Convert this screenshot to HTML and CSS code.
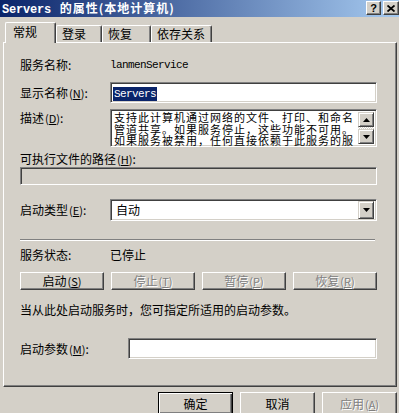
FILE: index.html
```html
<!DOCTYPE html>
<html lang="zh-CN">

<head>
    <meta charset="UTF-8">
    <meta name="viewport" content="width=device-width, initial-scale=1.0">
    <title>Servers 的属性</title>
    <link rel="stylesheet" href="styles.css">
</head>

<body>
    <div class="caption">
        <span class="caption-text"><span class="mono">Servers</span> 的属性(本地计算机)</span>
        <div class="caption-btns">
            <span class="cbtn help">?</span>
            <span class="cbtn close">
                <svg width="8" height="7" viewBox="0 0 8 7">
                    <path d="M0.5 0.5 L7.5 6.5 M7.5 0.5 L0.5 6.5" stroke="#000" stroke-width="1.8" fill="none"/>
                </svg>
            </span>
        </div>
    </div>

    <ul class="tabs">
        <li class="tab active">常规</li>
        <li class="tab t-logon">登录</li>
        <li class="tab t-recover">恢复</li>
        <li class="tab t-depend">依存关系</li>
    </ul>

    <div class="panel">
        <div class="row r-name">
            <span class="label">服务名称:</span>
            <span class="mono">lanmenService</span>
        </div>

        <div class="row r-display">
            <span class="label">显示名称<span class="key">(<u>N</u>)</span>:</span>
            <div class="field edit">
                <span class="mono selected">Servers</span>
            </div>
        </div>

        <div class="row r-desc">
            <span class="label">描述<span class="key">(<u>D</u>)</span>:</span>
            <div class="field memo">
                <div class="memo-text">
                    <p>支持此计算机通过网络的文件、打印、和命名</p>
                    <p>管道共享。如果服务停止，这些功能不可用。</p>
                    <p>如果服务被禁用，任何直接依赖于此服务的服</p>
                </div>
                <div class="vscroll">
                    <span class="sbtn">
                        <svg width="7" height="4" viewBox="0 0 7 4"><path d="M3.5 0 L7 4 L0 4 Z" fill="#000"/></svg>
                    </span>
                    <span class="track"></span>
                    <span class="sbtn">
                        <svg width="7" height="4" viewBox="0 0 7 4"><path d="M0 0 L7 0 L3.5 4 Z" fill="#000"/></svg>
                    </span>
                </div>
            </div>
        </div>

        <div class="row r-pathlabel">
            <span>可执行文件的路径<span class="key">(<u>H</u>)</span>:</span>
        </div>
        <div class="row r-path">
            <div class="field disabled"></div>
        </div>

        <div class="row r-type">
            <span class="label">启动类型<span class="key">(<u>E</u>)</span>:</span>
            <div class="field combo">
                <span class="combo-text">自动</span>
                <span class="drop">
                    <svg width="7" height="4" viewBox="0 0 7 4"><path d="M0 0 L7 0 L3.5 4 Z" fill="#000"/></svg>
                </span>
            </div>
        </div>

        <div class="sep"></div>

        <div class="row r-status">
            <span class="label">服务状态:</span>
            <span>已停止</span>
        </div>

        <div class="row r-buttons">
            <button class="btn">启动<span class="key">(<u>S</u>)</span></button>
            <button class="btn off">停止<span class="key">(<u>T</u>)</span></button>
            <button class="btn off">暂停<span class="key">(<u>P</u>)</span></button>
            <button class="btn off">恢复<span class="key">(<u>R</u>)</span></button>
        </div>

        <div class="row r-hint">当从此处启动服务时，您可指定所适用的启动参数。</div>

        <div class="row r-params">
            <span class="label wide">启动参数<span class="key">(<u>M</u>)</span>:</span>
            <div class="field edit"></div>
        </div>
    </div>

    <div class="footer">
        <button class="btn big default">确定</button>
        <button class="btn big">取消</button>
        <button class="btn big off">应用<span class="key">(<u>A</u>)</span></button>
    </div>
</body>

</html>
```

FILE: styles.css
```css
* {
    margin: 0;
    padding: 0;
    list-style: none;
    box-sizing: border-box;
}

body {
    width: 399px;
    height: 413px;
    overflow: hidden;
    background-color: #d4d0c8;
    font: 12px/14px "Noto Sans CJK SC", sans-serif;
    color: #000;
}

.mono {
    font-family: "Liberation Mono", "Noto Sans CJK SC", monospace;
    font-size: 11px;
    letter-spacing: -0.6px;
}

.key {
    font-size: 11px;
    margin-left: 1px;
}

/* 标题栏 */
.caption {
    height: 17px;
    display: flex;
    align-items: center;
    justify-content: space-between;
    padding-left: 2px;
    background: linear-gradient(to right, #0a246a, #a6caf0);
    color: #fff;
    font-weight: bold;
}

.caption-text {
    letter-spacing: 1px;
}

.caption .mono {
    font-size: 12px;
    letter-spacing: -0.2px;
    margin-right: 5px;
}

.caption-btns {
    display: flex;
    gap: 2px;
    align-self: flex-start;
    margin-top: 1px;
}

.cbtn {
    width: 15px;
    height: 14px;
    display: flex;
    align-items: center;
    justify-content: center;
    background-color: #d4d0c8;
    border: 1px solid;
    border-color: #fff #404040 #404040 #fff;
    box-shadow: inset -1px -1px #808080;
    color: #000;
    font: bold 11px/12px "Liberation Sans", sans-serif;
    letter-spacing: 0;
}

.cbtn.close {
    width: 16px;
}

/* 选项卡 */
.tabs {
    display: flex;
    align-items: flex-end;
    height: 20px;
    margin-top: 5px;
    padding-left: 5px;
}

.tab {
    height: 17px;
    padding-left: 5px;
    line-height: 15px;
    border-top: 1px solid #fff;
    border-left: 1px solid #fff;
    border-right: 1px solid #404040;
    box-shadow: inset -1px 0 #808080;
    border-radius: 2px 2px 0 0;
}

.tab.active {
    width: 51px;
    height: 21px;
    margin-bottom: -1px;
    padding-left: 7px;
    line-height: 17px;
    position: relative;
    z-index: 1;
    background-color: #d4d0c8;
}

.t-logon {
    width: 46px;
}

.t-recover {
    width: 49px;
}

.t-depend {
    width: 61px;
}

/* 属性页 */
.panel {
    margin-left: 3px;
    width: 394px;
    height: 345px;
    border: 1px solid;
    border-color: #fff #404040 #404040 #fff;
    box-shadow: inset -1px -1px #808080;
    padding: 0 19px 0 16px;
}

.row {
    display: flex;
    align-items: center;
}

.label {
    width: 90px;
    flex-shrink: 0;
}

.label.wide {
    width: 108px;
}

.field {
    flex: 1;
    border: 1px solid;
    border-color: #808080 #fff #fff #808080;
    box-shadow: inset 1px 1px #404040, inset -1px -1px #d4d0c8;
    background-color: #fff;
}

.r-name {
    margin-top: 15px;
    height: 14px;
}

.r-display {
    margin-top: 10px;
    height: 21px;
}

.edit {
    height: 21px;
    padding: 2px 0 0 2px;
}

.selected {
    display: inline-block;
    height: 14px;
    line-height: 14px;
    padding: 0 1px;
    background-color: #0a246a;
    color: #fff;
}

.r-desc {
    margin-top: 6px;
    height: 38px;
    align-items: flex-start;
}

.r-desc .label {
    padding-top: 2px;
}

.memo {
    height: 38px;
    display: flex;
    padding: 2px;
}

.memo-text {
    flex: 1;
    height: 34px;
    padding-left: 1px;
    font-size: 11px;
    line-height: 11.6px;
    letter-spacing: 1px;
    white-space: nowrap;
}

.vscroll {
    width: 16px;
    display: flex;
    flex-direction: column;
}

.sbtn {
    height: 15px;
    display: flex;
    align-items: center;
    justify-content: center;
    background-color: #d4d0c8;
    border: 1px solid;
    border-color: #d4d0c8 #404040 #404040 #d4d0c8;
    box-shadow: inset 1px 1px #fff, inset -1px -1px #808080;
}

.track {
    flex: 1;
    background: repeating-conic-gradient(#fff 0 25%, #d4d0c8 0 50%) 0 0 / 2px 2px;
}

.r-pathlabel {
    margin-top: 5px;
    height: 13px;
}

.r-path {
    margin-top: 2px;
    height: 18px;
}

.disabled {
    height: 18px;
    background-color: #d4d0c8;
}

.r-type {
    margin-top: 14px;
    height: 22px;
}

.combo {
    height: 22px;
    display: flex;
    align-items: center;
    padding: 2px;
}

.combo-text {
    flex: 1;
    padding-left: 3px;
}

.drop {
    width: 16px;
    height: 18px;
    display: flex;
    align-items: center;
    justify-content: center;
    background-color: #d4d0c8;
    border: 1px solid;
    border-color: #d4d0c8 #404040 #404040 #d4d0c8;
    box-shadow: inset 1px 1px #fff, inset -1px -1px #808080;
}

.sep {
    margin-top: 18px;
    margin-right: 2px;
    height: 2px;
    border-top: 1px solid #808080;
    border-bottom: 1px solid #fff;
}

.r-status {
    margin-top: 7px;
    height: 14px;
}

/* 按钮 */
.btn {
    height: 18px;
    display: flex;
    align-items: center;
    justify-content: center;
    background-color: #d4d0c8;
    border: 1px solid;
    border-color: #fff #404040 #404040 #fff;
    box-shadow: inset -1px -1px #808080;
    font: inherit;
    color: #000;
}

.btn.off {
    color: #808080;
    text-shadow: 1px 1px #fff;
}

.r-buttons {
    margin-top: 10px;
    height: 18px;
    justify-content: space-between;
}

.r-buttons .btn {
    width: 84px;
}

.r-hint {
    margin-top: 13px;
    height: 14px;
}

.r-params {
    margin-top: 21px;
    height: 21px;
}

.footer {
    display: flex;
    justify-content: flex-end;
    gap: 7px;
    margin-top: 5px;
    padding-right: 2px;
}

.btn.big {
    width: 75px;
    height: 23px;
}

.btn.default {
    border-color: #000;
    box-shadow: inset 1px 1px #fff, inset -1px -1px #404040, inset -2px -2px #808080;
}
```
